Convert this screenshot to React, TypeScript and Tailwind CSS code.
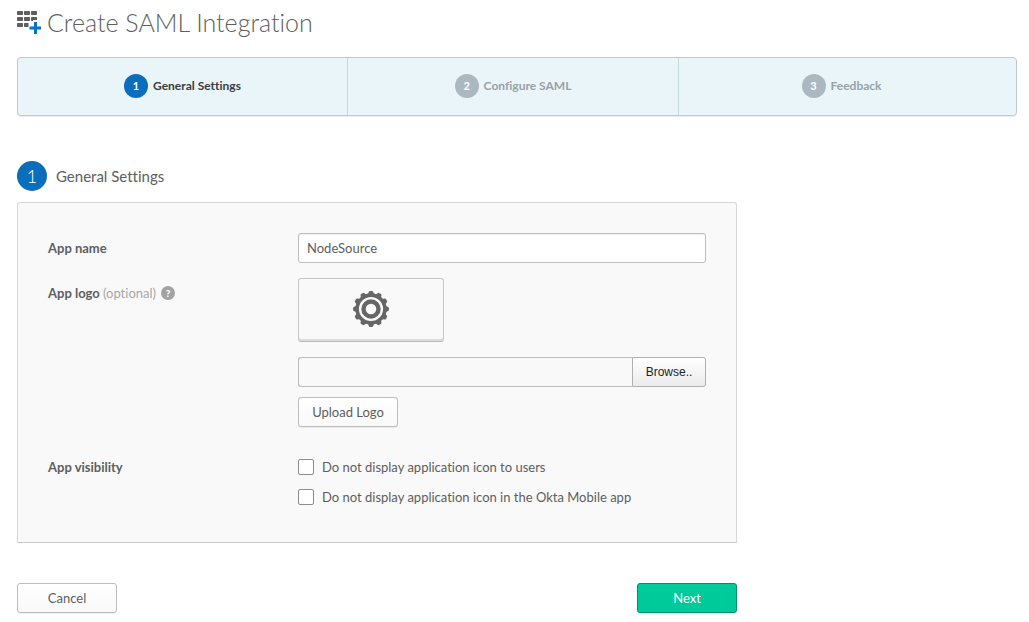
import { useState } from 'react'

const steps = ['General Settings', 'Configure SAML', 'Feedback']

const teeth = [0, 30, 60, 90, 120, 150, 180, 210, 240, 270, 300, 330]

function AddAppIcon() {
  return (
    <svg className="w-6 h-6 shrink-0" viewBox="0 0 24 24" aria-hidden="true">
      <g fill="#5e5e5e">
        <rect x="0" y="1" width="6" height="4" rx="0.8" />
        <rect x="7" y="1" width="6" height="4" rx="0.8" />
        <rect x="14" y="1" width="6" height="4" rx="0.8" />
        <rect x="0" y="7" width="6" height="4" rx="0.8" />
        <rect x="7" y="7" width="6" height="4" rx="0.8" />
        <path d="M14.8 7h4.4q.8 0 .8.8V10h-4v1h-1.2q-.8 0-.8-.8V7.8q0-.8.8-.8z" />
        <rect x="0" y="13" width="6" height="4" rx="0.8" />
        <path d="M7.8 13h3.7v4H7.8q-.8 0-.8-.8v-2.4q0-.8.8-.8z" />
      </g>
      <path d="M18.5 12v12M12.5 18h12" stroke="#0074c8" strokeWidth="3" />
    </svg>
  )
}

function GearIcon() {
  return (
    <svg className="w-9 h-9" viewBox="-18 -18 36 36" aria-hidden="true">
      <g fill="#666">
        {teeth.map((angle) => (
          <path
            key={angle}
            d="M-3.4 -14L-2.1 -17.2Q-1.8 -17.9 -1.1 -17.9H1.1Q1.8 -17.9 2.1 -17.2L3.4 -14z"
            transform={`rotate(${angle})`}
          />
        ))}
      </g>
      <circle r="13.9" fill="none" stroke="#666" strokeWidth="3.6" />
      <circle r="7.5" fill="none" stroke="#666" strokeWidth="4.4" />
    </svg>
  )
}

export default function App() {
  const [appName, setAppName] = useState('NodeSource')
  const [hideFromUsers, setHideFromUsers] = useState(false)
  const [hideFromMobile, setHideFromMobile] = useState(false)

  const checkbox =
    'w-4 h-4 shrink-0 appearance-none rounded-[2px] border border-[#8c8c8c] bg-white checked:bg-[#0a6ebd]'
  const button =
    'h-[30px] w-[100px] rounded-[3px] border text-[13px] shadow-[0_1px_0_rgba(0,0,0,0.06)]'

  return (
    <main className="pt-2 pr-3 pb-2 pl-[17px] font-['Lato',sans-serif] text-[13px] leading-5 text-[#5e5e5e] [font-variant-ligatures:none]">
      <header className="flex items-center gap-[6px] h-7">
        <AddAppIcon />
        <h1 className="text-[25px] leading-7 font-light">Create SAML Integration</h1>
      </header>

      {/* Wizard steps */}
      <ol className="mt-[21px] grid grid-cols-[330fr_331fr_337fr] rounded-[4px] border border-[#bccbd3] bg-[#eaf5fa] shadow-[0_1px_1px_rgba(0,0,0,0.08)]">
        {steps.map((step, i) => (
          <li
            key={step}
            className="flex h-[57px] items-center justify-center gap-[5px] border-r border-[#c8d8df] pb-[2px] text-[12px] font-bold text-[#98a1a6] last:border-r-0 last:pr-3 first:text-[#3c3c3c]"
          >
            <span
              className={
                i === 0
                  ? 'flex w-6 h-6 items-center justify-center rounded-full bg-[#0a6ebd] text-[11px] text-white'
                  : 'flex w-6 h-6 items-center justify-center rounded-full bg-[#acb8bf] text-[11px] text-white'
              }
            >
              {i + 1}
            </span>
            {step}
          </li>
        ))}
      </ol>

      <form className="mt-[45px] w-[720px] max-w-full" onSubmit={(e) => e.preventDefault()}>
        <h2 className="flex items-center gap-[9px] text-[15px]">
          <span className="flex w-[30px] h-[30px] items-center justify-center rounded-full bg-[#0a6ebd] text-[18px] font-light text-white">
            1
          </span>
          General Settings
        </h2>

        <div className="mt-[11px] rounded-t-[3px] border border-[#d8d8d8] border-b-[#cacaca] bg-[#f9f9f9] p-[30px]">
          {/* App name */}
          <div className="grid grid-cols-[250px_1fr] items-center">
            <label htmlFor="app-name" className="font-bold">
              App name
            </label>
            <input
              id="app-name"
              type="text"
              value={appName}
              onChange={(e) => setAppName(e.target.value)}
              className="h-[30px] w-full rounded-[3px] border border-[#bdbdbd] bg-white px-2 shadow-[inset_0_1px_1px_rgba(0,0,0,0.06)]"
            />
          </div>

          {/* App logo */}
          <div className="mt-[15px] grid grid-cols-[250px_1fr] items-start">
            <div className="flex h-[30px] items-center gap-[5px]">
              <label htmlFor="app-logo" className="font-bold">
                App logo <span className="font-normal text-[#a7a7a7]">(optional)</span>
              </label>
              <button
                type="button"
                aria-label="Help"
                className="flex w-[14px] h-[14px] items-center justify-center rounded-full bg-[#a2a2a2] text-[10px] font-black text-white"
              >
                ?
              </button>
            </div>
            <div>
              <div className="flex h-16 w-[146px] items-center justify-center rounded-[3px] border border-[#c6c6c6] border-b-[#bababa] pb-[2px] shadow-[inset_0_-2px_0_#dcdcdc]">
                <GearIcon />
              </div>
              <div className="mt-[15px] flex h-[30px]">
                <input
                  id="app-logo"
                  type="text"
                  readOnly
                  className="min-w-0 flex-1 rounded-l-[3px] border border-r-0 border-[#bdbdbd] px-2"
                />
                <button
                  type="button"
                  className="w-[74px] rounded-r-[3px] border border-[#b0b0b0] bg-gradient-to-b from-white to-[#ebebeb] font-['Liberation_Sans',sans-serif] text-[12px] text-[#222]"
                >
                  Browse..
                </button>
              </div>
              <button
                type="button"
                className={`${button} mt-[10px] block border-[#bdbdbd] bg-gradient-to-b from-white to-[#f9f9f9]`}
              >
                Upload Logo
              </button>
            </div>
          </div>

          {/* App visibility */}
          <fieldset className="mt-[25px] grid grid-cols-[250px_1fr] items-start">
            <legend className="float-left leading-[30px] font-bold">App visibility</legend>
            <div>
              <label className="flex h-[30px] items-center gap-2">
                <input
                  type="checkbox"
                  checked={hideFromUsers}
                  onChange={(e) => setHideFromUsers(e.target.checked)}
                  className={checkbox}
                />
                Do not display application icon to users
              </label>
              <label className="flex h-[30px] items-center gap-2">
                <input
                  type="checkbox"
                  checked={hideFromMobile}
                  onChange={(e) => setHideFromMobile(e.target.checked)}
                  className={checkbox}
                />
                Do not display application icon in the Okta Mobile app
              </label>
            </div>
          </fieldset>
        </div>

        <div className="mt-10 flex justify-between">
          <button
            type="button"
            className={`${button} border-[#bdbdbd] bg-gradient-to-b from-white to-[#f9f9f9]`}
          >
            Cancel
          </button>
          <button type="submit" className={`${button} border-[#008f6b] bg-[#00c99a] text-white`}>
            Next
          </button>
        </div>
      </form>
    </main>
  )
}
